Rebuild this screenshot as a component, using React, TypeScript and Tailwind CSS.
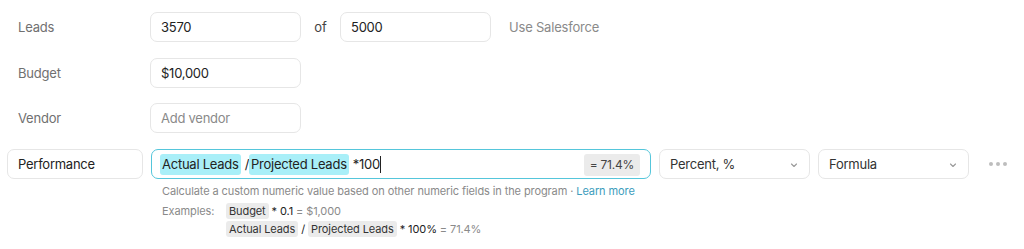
import React from "react";

const font = { fontFamily: "Inter, 'Noto Sans', sans-serif" };

function Chevron() {
  return (
    <svg width="10" height="10" viewBox="0 0 10 10" className="text-[#9a9a9a]">
      <path d="M2.5 4 L5 6.5 L7.5 4" fill="none" stroke="currentColor" strokeWidth="1.1" strokeLinecap="round" strokeLinejoin="round" />
    </svg>
  );
}

function Box({ children, className = "" }: { children?: React.ReactNode; className?: string }) {
  return (
    <div className={`h-[30px] rounded-[7px] border border-[#e6e6e6] bg-white flex items-center px-[10px] pt-[2px] text-[13px] tracking-[-0.25px] ${className}`}>
      {children}
    </div>
  );
}

function Label({ children }: { children: React.ReactNode }) {
  return <div className="w-[143px] pl-[11px] pt-[2px] text-[13px] tracking-[-0.2px] text-[#707070]">{children}</div>;
}

function Chip({ children }: { children: React.ReactNode }) {
  return <span className="bg-[#ebebeb] rounded-[3px] px-[3px] py-[1px] text-[#333]">{children}</span>;
}

export default function App() {
  return (
    <div className="w-[1024px] h-[249px] bg-white pl-[7px] pt-[12px] flex flex-col gap-[15px]" style={font}>
      <div className="flex items-center">
        <Label>Leads</Label>
        <Box className="w-[151px] text-[#222]">3570</Box>
        <div className="w-[39px] pt-[2px] text-center text-[13px] text-[#444]">of</div>
        <Box className="w-[151px] text-[#222]">5000</Box>
        <div className="ml-[18px] pt-[2px] text-[13px] tracking-[-0.2px] text-[#8a8a8a]">Use Salesforce</div>
      </div>
      <div className="flex items-center mt-[1px]">
        <Label>Budget</Label>
        <Box className="w-[151px] text-[#222]">$10,000</Box>
      </div>
      <div className="flex items-center">
        <Label>Vendor</Label>
        <Box className="w-[151px] text-[#8a8a8a]">Add vendor</Box>
      </div>
      <div className="flex flex-col mt-[1px]">
        <div className="flex items-center">
          <Box className="w-[136px] text-[#222]">Performance</Box>
          <div className="w-[8px]" />
          <div className="h-[30px] w-[500px] rounded-[7px] border border-[#55c6db] bg-white flex items-center pl-[8px] pr-[10px] pt-[1px] text-[13px] tracking-[-0.25px] text-[#222]">
            <span className="bg-[#a9eff8] rounded-[3px] px-[2px] py-[1px]">Actual Leads</span>
            <span className="ml-[4px]">/</span>
            <span className="bg-[#a9eff8] rounded-[3px] px-[2px] py-[1px]">Projected Leads</span>
            <span className="ml-[4px]">*100</span>
            <span className="w-[1px] h-[17px] bg-[#222]" />
            <span className="ml-auto bg-[#ebebeb] rounded-[3px] px-[6px] py-[2px] text-[12px] text-[#444]">= 71.4%</span>
          </div>
          <div className="w-[8px]" />
          <Box className="w-[151px] text-[#333] justify-between">
            <span>Percent, %</span>
            <Chevron />
          </Box>
          <div className="w-[8px]" />
          <Box className="w-[151px] text-[#333] justify-between">
            <span>Formula</span>
            <Chevron />
          </Box>
          <div className="ml-[20px] flex gap-[3px]">
            <span className="w-[4px] h-[4px] rounded-full bg-[#bdbdbd]" />
            <span className="w-[4px] h-[4px] rounded-full bg-[#bdbdbd]" />
            <span className="w-[4px] h-[4px] rounded-full bg-[#bdbdbd]" />
          </div>
        </div>
        <div className="ml-[155px] mt-[3px] text-[11px] tracking-[-0.1px] text-[#8a8a8a] leading-[18px]">
          <div>
            Calculate a custom numeric value based on other numeric fields in the program ·{" "}
            <span className="text-[#3c9dbd]">Learn more</span>
          </div>
          <div className="flex mt-[2px]">
            <div className="w-[64px]">Examples:</div>
            <div className="flex flex-col">
              <div>
                <Chip>Budget</Chip> <span className="text-[#222]">* 0.1</span> = $1,000
              </div>
              <div>
                <Chip>Actual Leads</Chip> <span className="text-[#222]">/</span> <Chip>Projected Leads</Chip>{" "}
                <span className="text-[#222]">* 100%</span> = 71.4%
              </div>
            </div>
          </div>
        </div>
      </div>
    </div>
  );
}
